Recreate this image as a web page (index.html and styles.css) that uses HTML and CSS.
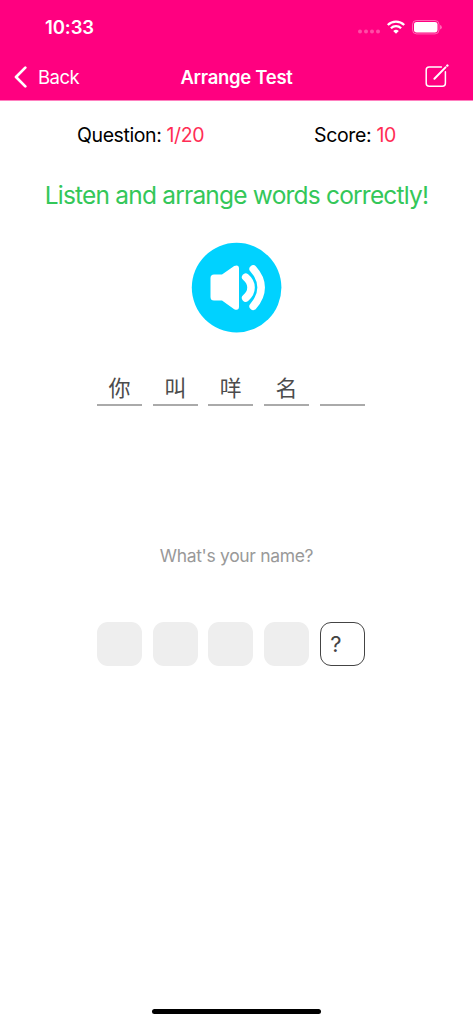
FILE: index.html
```html
<!DOCTYPE html>
<html lang="en">
<head>
<meta charset="utf-8">
<title>Arrange Test</title>
<link rel="stylesheet" href="styles.css">
</head>
<body>
<div class="screen">
  <header class="header">
    <div class="status">
      <span class="time">10:33</span>
      <div class="indicators">
        <svg class="cellular" width="22" height="5" viewBox="0 0 22 5"><g fill="#fff" opacity=".3"><circle cx="2" cy="2.5" r="2"/><circle cx="8" cy="2.5" r="2"/><circle cx="14" cy="2.5" r="2"/><circle cx="20" cy="2.5" r="2"/></g></svg>
        <svg class="wifi" width="18" height="14" viewBox="0 0 18 14"><g fill="none" stroke="#fff" stroke-width="2.3"><path d="M.8 5A11.7 11.7 0 0 1 17.2 5"/><path d="M3.9 8.2A7.3 7.3 0 0 1 14.1 8.2"/></g><path d="M9 13.8L6.2 11a4 4 0 0 1 5.6 0z" fill="#fff"/></svg>
        <svg class="battery" width="30" height="15" viewBox="0 0 30 15"><rect x=".5" y=".5" width="26.5" height="13.4" rx="4" fill="none" stroke="#fff" opacity=".4"/><rect x="2" y="2" width="23.5" height="10.4" rx="2.6" fill="#fff"/><path d="M28.2 5v4.5q1.5-.6 1.5-2.25T28.2 5z" fill="#fff" opacity=".5"/></svg>
      </div>
    </div>
    <nav class="nav">
      <a class="back"><svg width="14" height="22" viewBox="0 0 14 22"><path d="M11.3 1.6L2 11l9.3 9.4" fill="none" stroke="#fff" stroke-width="2.7" stroke-linecap="round" stroke-linejoin="round"/></svg><span class="back-label">Back</span></a>
      <h1 class="title">Arrange Test</h1>
      <a class="compose"><svg width="25" height="25" viewBox="0 0 25 25" fill="none" stroke="#fff" stroke-width="1.5" stroke-linecap="round"><path d="M16.4 3H4.2Q1.2 3 1.2 6v13.2q0 3 3 3h13.2q3 0 3-3V7.7"/><path d="M9.4 14.7L20.5 3.4" stroke-width="2"/><path d="M22.3 1.6l.1-.1" stroke-width="2.4"/></svg></a>
    </nav>
  </header>
  <main class="content">
    <div class="stats">
      <p class="stat question">Question: <span class="value">1/20</span></p>
      <p class="stat score">Score: <span class="value">10</span></p>
    </div>
    <h2 class="prompt">Listen and arrange words correctly!</h2>
    <button class="play" aria-label="Play">
      <svg width="90" height="90" viewBox="0 0 90 90"><circle cx="44.6" cy="44.6" r="44.8" fill="#00d2ff"/><g transform="translate(0 -.4)"><path d="M22 32h8L42.2 23.3Q47 21.5 47 26v38Q47 68.5 42.2 66.7L30 58h-8q-3.5 0-3.5-3.5v-19Q18.5 32 22 32z" fill="#fff"/><g fill="none" stroke="#fff" stroke-width="7.6" stroke-linecap="round"><path d="M53.7 34.6C60.8 40.5 60.8 49.5 53.7 55.4"/><path d="M61.2 26.4C71.8 38 71.8 52 61.2 63.6"/></g></g></svg>
    </button>
    <div class="row answers" lang="zh-Hans">
      <span class="slot">你</span><span class="slot">叫</span><span class="slot">咩</span><span class="slot">名</span><span class="slot"></span>
    </div>
    <p class="translation">What's your name?</p>
    <div class="row tiles">
      <span class="tile"></span><span class="tile"></span><span class="tile"></span><span class="tile"></span><span class="tile active">?</span>
    </div>
  </main>
  <div class="home"></div>
</div>
</body>
</html>
```
FILE: styles.css
```css
* { box-sizing: border-box; margin: 0; padding: 0; }
body { background: #fff; font-family: Inter, "Noto Sans CJK SC", sans-serif; color: #000; }
.screen { width: 473px; height: 1024px; display: flex; flex-direction: column; overflow: hidden; }
.header { height: 101px; background: #ff0080; color: #fff; border-bottom: 1px solid #ff80bf; flex: none; }
.status { height: 53px; display: flex; justify-content: space-between; padding: 0 31px 0 45px; }
.time { font-size: 18.5px; font-weight: 600; line-height: 24px; margin-top: 15px; letter-spacing: -.1px; }
.indicators { display: flex; margin-top: 19px; }
.cellular { margin: 10px 7px 0 0; }
.wifi { margin: 1px 7px 0 0; }
.battery { margin-top: 1px; }
.nav { height: 47px; display: grid; grid-template-columns: 1fr auto 1fr; align-items: center; padding: 0 24px 0 14px; }
.back { display: flex; align-items: center; gap: 10px; }
.back-label { font-size: 18.5px; letter-spacing: -.5px; line-height: 24px; }
.title { font-size: 18.5px; font-weight: 600; letter-spacing: -.3px; line-height: 24px; margin-left: 10px; }
.compose { justify-self: end; display: flex; margin-right: -1px; }
.content { flex: 1; display: flex; flex-direction: column; align-items: center; }
.stats { width: 100%; display: grid; grid-template-columns: 1fr 1fr; padding-left: 77px; margin-top: 22px; }
.stat { font-size: 19.5px; line-height: 24px; letter-spacing: -.4px; white-space: nowrap; }
.score { margin-left: 39px; letter-spacing: -.35px; }
.value { color: #ff2d55; }
.prompt { font-size: 24.5px; font-weight: 400; line-height: 32px; letter-spacing: -.8px; color: #34c759; margin-top: 32px; white-space: nowrap; }
.play { width: 90px; height: 90px; margin-top: 32px; border: 0; background: none; }
.play svg { display: block; overflow: visible; }
.row { display: flex; gap: 10.7px; width: 268px; margin-right: 11px; }
.answers { margin-top: 37px; }
.slot { width: 45px; height: 36px; border-bottom: 2px solid #aaa; text-align: center; font: 400 22px/32px "Noto Sans CJK SC", sans-serif; color: #4c4c4c; }
.translation { margin-top: 139px; font-size: 17.5px; line-height: 22px; letter-spacing: -.33px; color: #999; }
.tiles { margin-top: 55px; }
.tile { width: 45px; height: 44px; border-radius: 11px; background: #eee; }
.active { background: #fff; border: 1.3px solid #444; color: #444; font: 400 22px/42px Inter, sans-serif; padding-left: 9.5px; }
.home { width: 169px; height: 5px; border-radius: 3px; background: #000; margin: 0 auto 10px; }
```
